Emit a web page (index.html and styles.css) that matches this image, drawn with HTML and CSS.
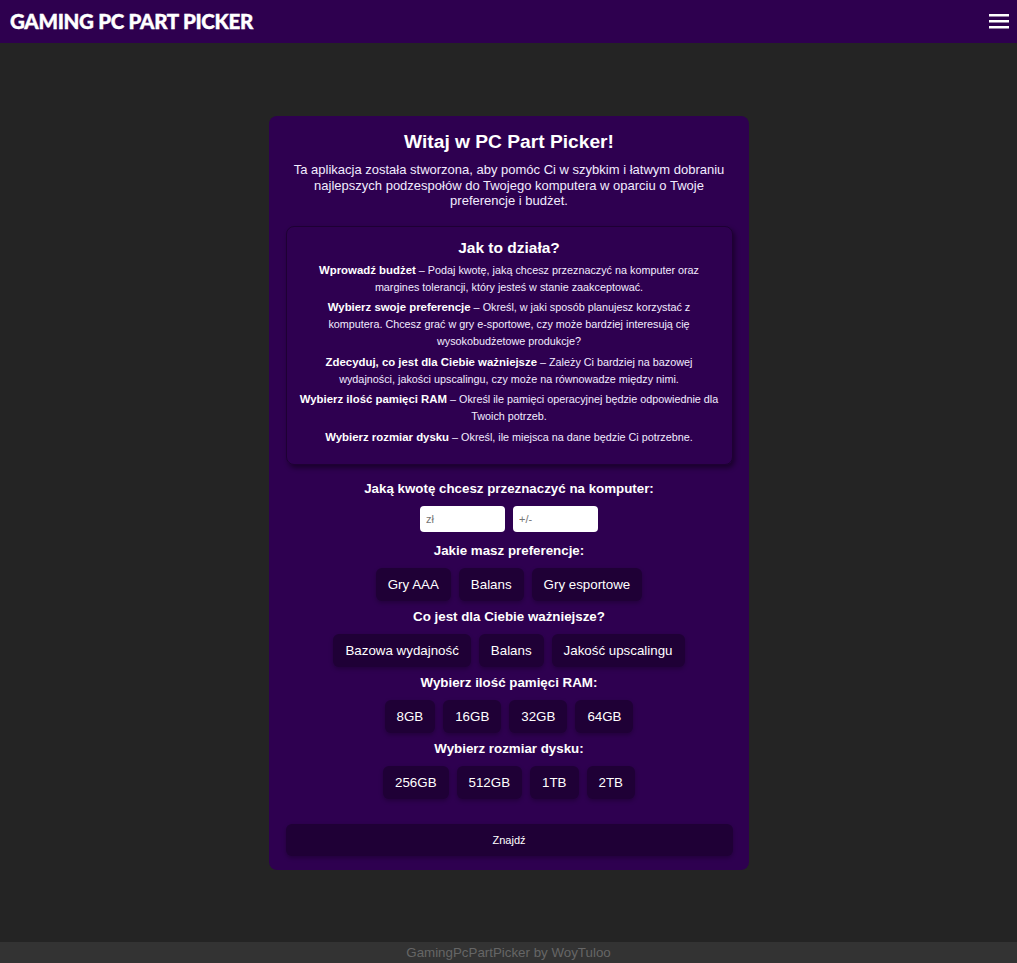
FILE: index.html
```html
<!DOCTYPE html>
<html lang="pl">
<head>
<meta charset="utf-8">
<title>Gaming PC Part Picker</title>
<link rel="stylesheet" href="styles.css">
</head>
<body>
<header class="topbar">
  <div class="brand">GAMING PC PART PICKER</div>
  <button class="menu" aria-label="Menu">
    <svg width="20" height="16" viewBox="0 0 20 16"><rect x="0" y="0" width="20" height="2.5" fill="#fff"/><rect x="0" y="6" width="20" height="2.5" fill="#fff"/><rect x="0" y="12" width="20" height="2.5" fill="#fff"/></svg>
  </button>
</header>
<main class="main">
  <section class="card">
    <h1 class="card-title">Witaj w PC Part Picker!</h1>
    <p class="intro">Ta aplikacja została stworzona, aby pomóc Ci w szybkim i łatwym dobraniu najlepszych podzespołów do Twojego komputera w oparciu o Twoje preferencje i budżet.</p>
    <div class="howto">
      <h2 class="howto-title">Jak to działa?</h2>
      <p><b>Wprowadź budżet</b> – Podaj kwotę, jaką chcesz przeznaczyć na komputer oraz margines tolerancji, który jesteś w stanie zaakceptować.</p>
      <p><b>Wybierz swoje preferencje</b> – Określ, w jaki sposób planujesz korzystać z<br>komputera. Chcesz grać w gry e-sportowe, czy może bardziej interesują cię wysokobudżetowe produkcje?</p>
      <p><b>Zdecyduj, co jest dla Ciebie ważniejsze</b> – Zależy Ci bardziej na bazowej wydajności, jakości upscalingu, czy może na równowadze między nimi.</p>
      <p><b>Wybierz ilość pamięci RAM</b> – Określ ile pamięci operacyjnej będzie odpowiednie dla Twoich potrzeb.</p>
      <p><b>Wybierz rozmiar dysku</b> – Określ, ile miejsca na dane będzie Ci potrzebne.</p>
    </div>
    <div class="form">
      <div class="label">Jaką kwotę chcesz przeznaczyć na komputer:</div>
      <div class="row row-inputs">
        <input class="field" type="text" placeholder="zł">
        <input class="field" type="text" placeholder="+/-">
      </div>
      <div class="label">Jakie masz preferencje:</div>
      <div class="row">
        <button class="opt">Gry AAA</button>
        <button class="opt">Balans</button>
        <button class="opt">Gry esportowe</button>
      </div>
      <div class="label">Co jest dla Ciebie ważniejsze?</div>
      <div class="row">
        <button class="opt">Bazowa wydajność</button>
        <button class="opt">Balans</button>
        <button class="opt">Jakość upscalingu</button>
      </div>
      <div class="label">Wybierz ilość pamięci RAM:</div>
      <div class="row">
        <button class="opt">8GB</button>
        <button class="opt">16GB</button>
        <button class="opt">32GB</button>
        <button class="opt">64GB</button>
      </div>
      <div class="label">Wybierz rozmiar dysku:</div>
      <div class="row">
        <button class="opt">256GB</button>
        <button class="opt">512GB</button>
        <button class="opt">1TB</button>
        <button class="opt">2TB</button>
      </div>
      <button class="submit">Znajdź</button>
    </div>
  </section>
</main>
<footer class="footer">GamingPcPartPicker by WoyTuloo</footer>
</body>
</html>
```

FILE: styles.css
```css
* { box-sizing: border-box; }
html, body { margin: 0; padding: 0; }
body {
  background: #242424;
  font-family: "Liberation Sans", Arial, sans-serif;
  color: #fff;
  min-height: 100vh;
  display: flex;
  flex-direction: column;
}
.topbar {
  height: 43px;
  flex-shrink: 0;
  background: #2e004f;
  display: flex;
  align-items: center;
  justify-content: space-between;
  padding: 0 8px 0 10px;
}
.brand {
  font-family: Lato, sans-serif;
  font-weight: 900;
  font-size: 20.5px;
  letter-spacing: -0.3px;
  -webkit-text-stroke: 0.4px #fff;
  color: #fff;
  line-height: 1;
}
.menu {
  background: none;
  border: 0;
  padding: 0;
  width: 20px;
  height: 16px;
  display: block;
  margin-top: 1px;
}
.menu svg { display: block; }
.main {
  flex: 1;
  display: flex;
  justify-content: center;
  align-items: flex-start;
  padding: 73px 0 20px;
}
.card {
  width: 480px;
  background: #2e0050;
  border-radius: 8px;
  padding: 14px 16px 14px 17px;
  text-align: center;
}
.card-title {
  margin: 0;
  font-size: 19.2px;
  line-height: 24px;
  font-weight: bold;
}
.intro {
  margin: 8px 0 0;
  font-size: 13px;
  line-height: 15.5px;
  color: #f2ecff;
}
.howto {
  margin-top: 17px;
  border-radius: 8px;
  border: 1px solid rgba(0,0,0,0.35);
  box-shadow: 2px 3px 5px rgba(0,0,0,0.45);
  padding: 11px 12.6px 18px;
}
.howto-title {
  margin: 0 0 4px;
  font-size: 15.5px;
  line-height: 20px;
  font-weight: bold;
}
.howto p {
  margin: 0 0 3.6px;
  font-size: 10.8px;
  line-height: 17px;
  color: #f2ecff;
}
.howto p:last-child { margin-bottom: 0; }
.howto b { color: #fff; font-size: 11.4px; line-height: 1; }
.form {
  margin-top: 16px;
  display: flex;
  flex-direction: column;
  align-items: center;
}
.label {
  font-size: 13.33px;
  line-height: 16px;
  font-weight: bold;
  margin-bottom: 9px;
}
.row {
  display: flex;
  justify-content: center;
  gap: 8px;
  margin-bottom: 8px;
}
.row-inputs { margin-bottom: 11px; }
.field {
  width: 85px;
  height: 26px;
  border: 0;
  border-radius: 4px;
  background: #fff;
  padding: 0 6px;
  font-family: "Liberation Sans", Arial, sans-serif;
  font-size: 11px;
  color: #333;
}
.field::placeholder { color: #757575; }
.opt {
  background: #1f0036;
  border: 0;
  border-radius: 6px;
  color: #fff;
  font-family: "Liberation Sans", Arial, sans-serif;
  font-size: 13.33px;
  line-height: 17px;
  padding: 8px 12px;
  box-shadow: 0 2px 4px rgba(0,0,0,0.25);
}
.submit {
  margin-top: 17px;
  width: 100%;
  height: 32px;
  background: #1f0036;
  border: 0;
  border-radius: 6px;
  color: #fff;
  font-family: "Liberation Sans", Arial, sans-serif;
  font-size: 11px;
  box-shadow: 0 2px 4px rgba(0,0,0,0.25);
}
.footer {
  height: 21px;
  flex-shrink: 0;
  background: #333;
  color: #666;
  text-align: center;
  font-size: 13.33px;
  line-height: 21px;
}
```
